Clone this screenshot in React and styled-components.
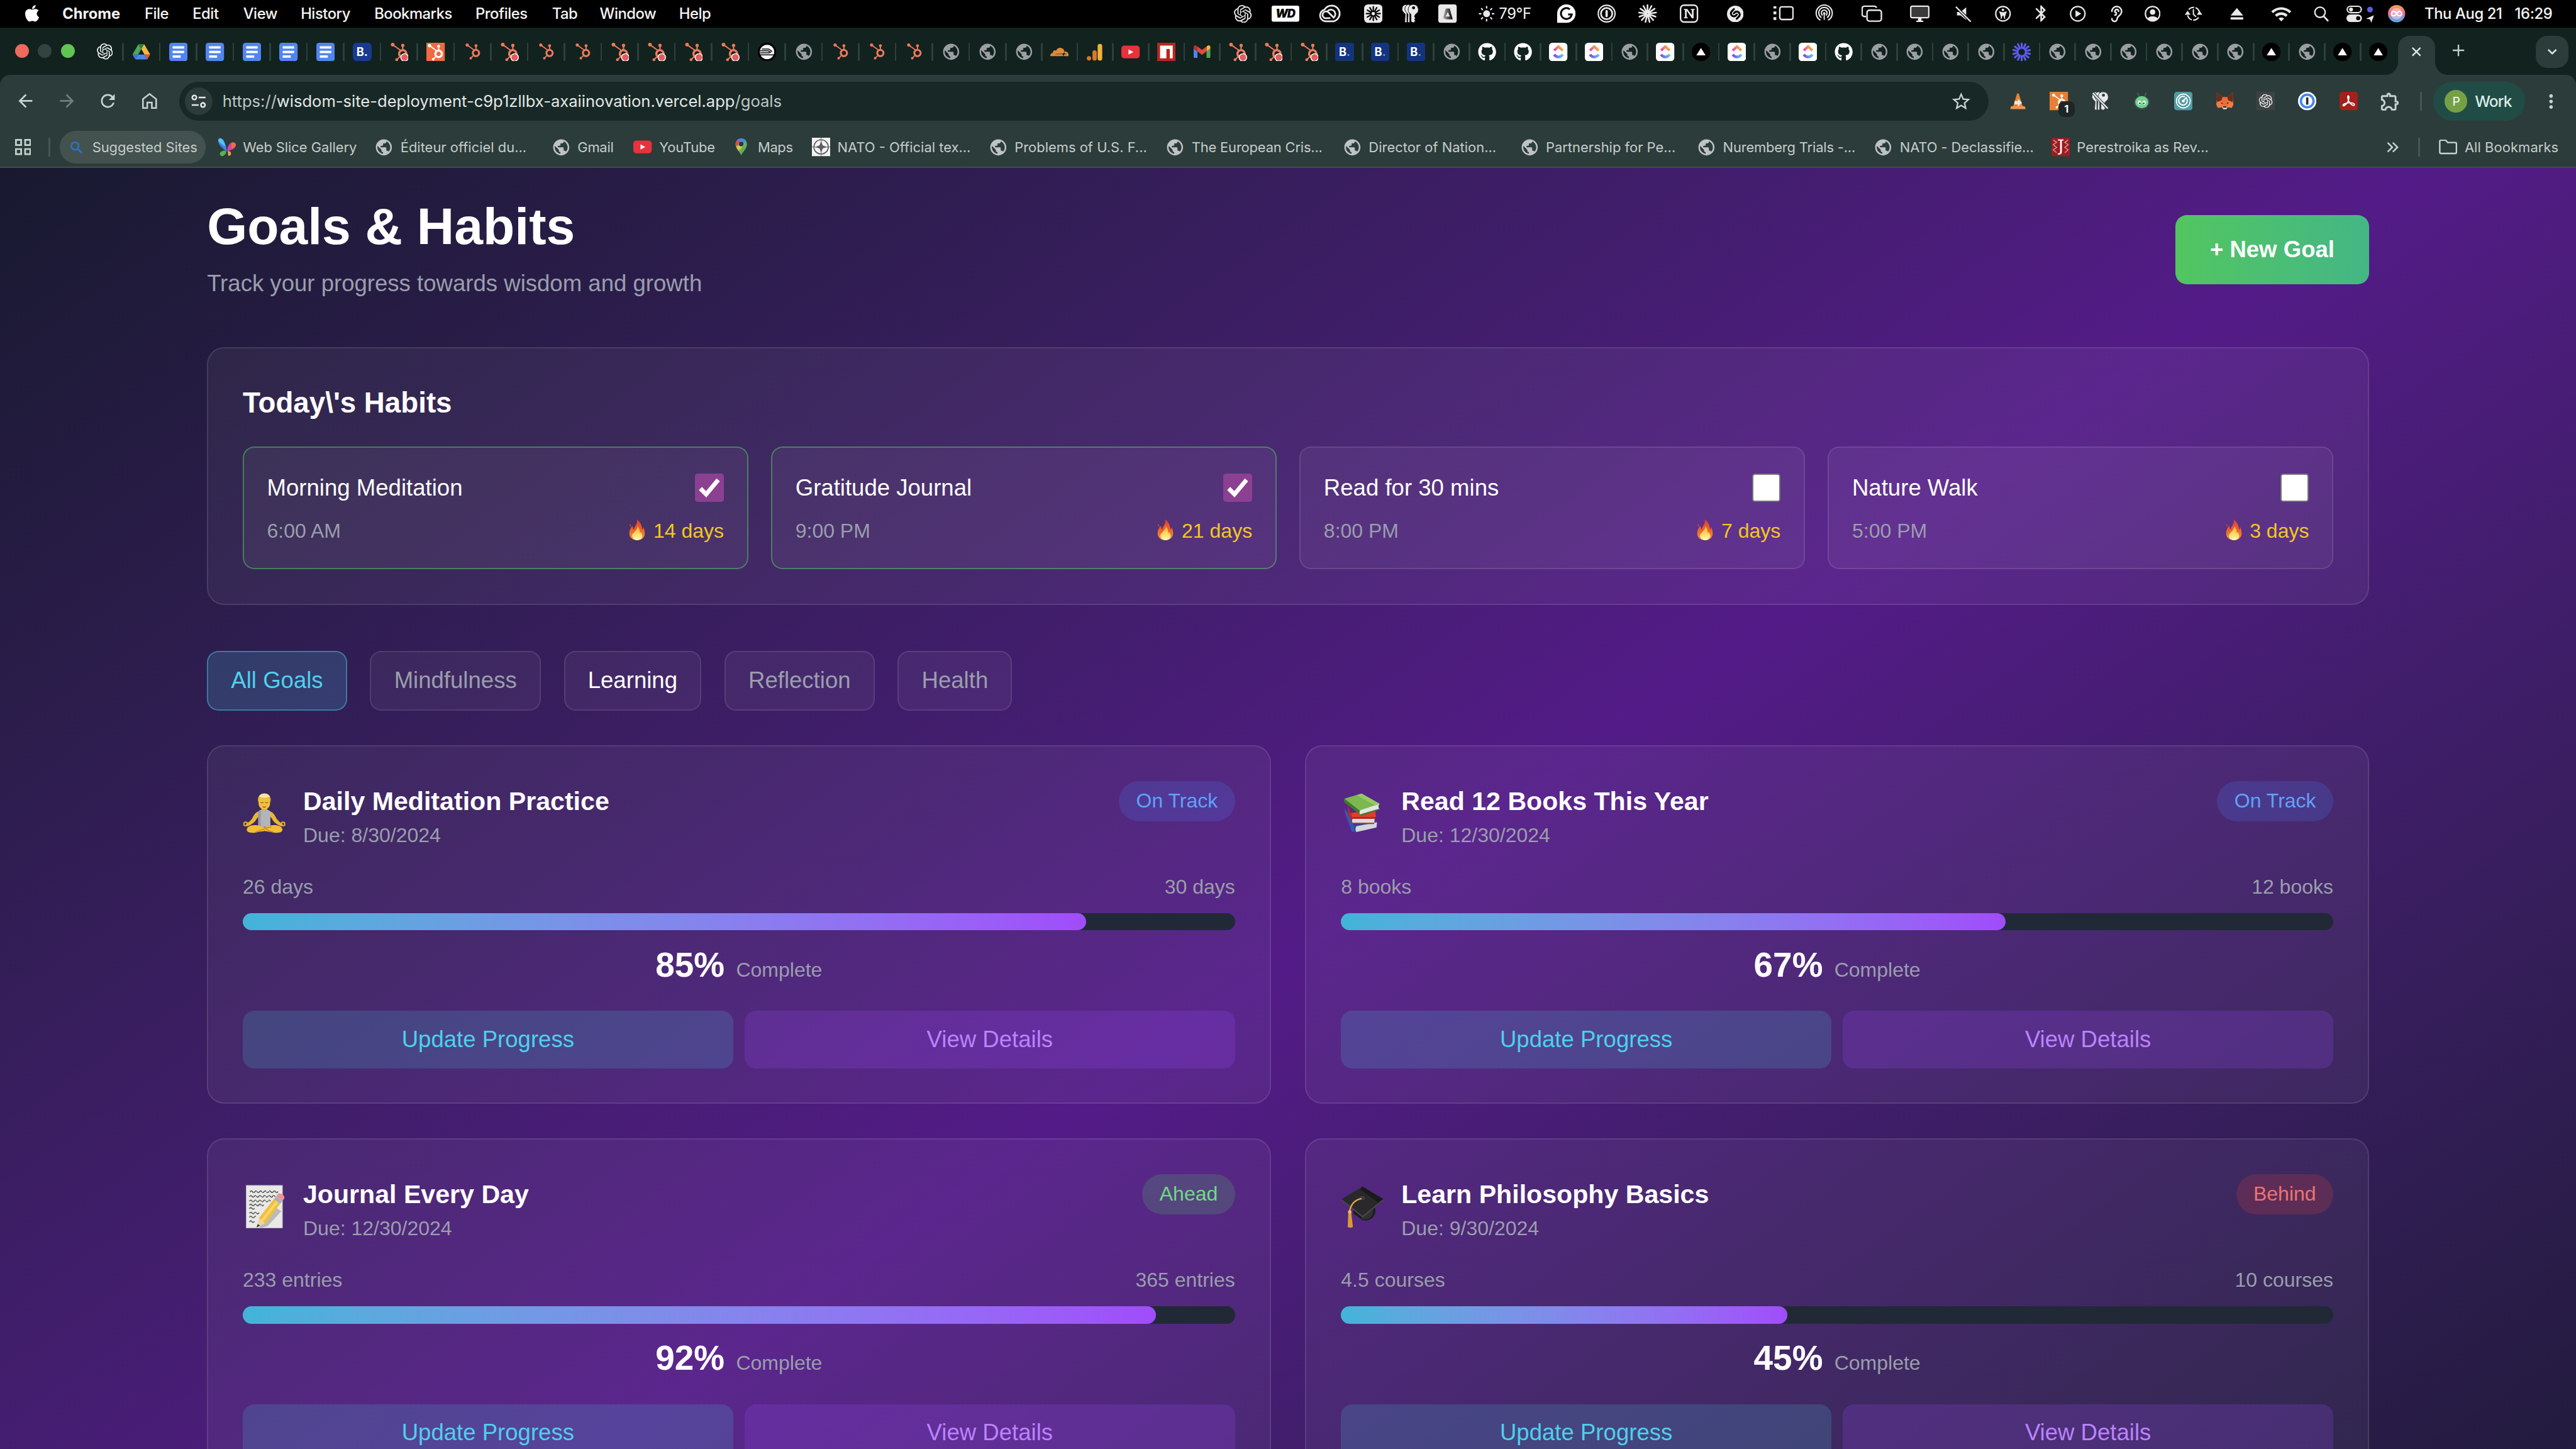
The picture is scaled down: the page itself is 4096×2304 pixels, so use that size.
import React from 'react';
import styled, { createGlobalStyle, css } from 'styled-components';
import { FaApple, FaHubspot, FaGithub } from 'react-icons/fa';
import { SiOpenai, SiShazam, SiCloudflare } from 'react-icons/si';
import {
  MdPublic, MdArrowBack, MdArrowForward, MdRefresh, MdStarBorder,
  MdOutlineExtension, MdMoreVert, MdWifi, MdBluetooth,
} from 'react-icons/md';
import { Ear } from 'lucide-react';

/* Design units: the layout is authored on a 4480-wide artboard. */
const SCALE = 4096 / 4480;
const u = (n) => `${+(n * SCALE).toFixed(3)}px`;

const Global = createGlobalStyle`
  *, *::before, *::after { box-sizing: border-box; }
  html, body { margin: 0; padding: 0; overflow: hidden; background: #12221f; }
  button { font: inherit; border: 0; cursor: pointer; }
  h1, h2, h3, p { margin: 0; }
  svg { display: block; flex: none; }
`;

const Screen = styled.div`
  width: 4096px;
  height: 2304px;
  overflow: hidden;
  display: flex;
  flex-direction: column;
`;

/* ---------- shared drawing helpers ---------- */
const Glyph = ({ w = 32, h = w, vb = `0 0 ${w} ${h}`, children, ...rest }) => (
  <svg width={w * SCALE} height={h * SCALE} viewBox={vb} fill="none" {...rest}>{children}</svg>
);

const Globe = ({ color = '#9b9fa2' }) => <MdPublic size={33.6 * SCALE} color={color} />;

/* ---------- macOS menu bar ---------- */
const uiFont = css`font-family: Inter, 'Liberation Sans', sans-serif;`;

const MenuBar = styled.header`
  ${uiFont}
  flex: none;
  height: ${u(48)};
  background: #000;
  color: #f4f4f4;
  font-size: ${u(26)};
  display: flex;
  align-items: center;
  padding-left: ${u(39)};
`;
const AppleSlot = styled.div`
  width: ${u(69.5)};
  padding-bottom: ${u(2)};
`;
const MenuItem = styled.div`
  width: ${(p) => u(p.$w)};
  white-space: nowrap;
  font-weight: ${(p) => (p.$bold ? 700 : 500)};
  letter-spacing: ${(p) => u(p.$ls ?? -0.5)};
`;
const StatusArea = styled.div`
  display: flex;
  align-items: center;
`;
const Slot = styled.div`
  width: ${(p) => u(p.$w ?? 32)};
  margin-left: ${(p) => u(p.$gap)};
  height: ${u(48)};
  display: flex;
  align-items: center;
  justify-content: ${(p) => (p.$start ? 'flex-start' : 'center')};
  white-space: nowrap;
  font-weight: ${(p) => p.$weight ?? 500};
  letter-spacing: ${(p) => u(p.$ls ?? -0.4)};
`;

const ray = (n, r1, r2, c = 16) => Array.from({ length: n }, (_, i) => {
  const a = (i / n) * Math.PI * 2;
  return `M${(c + Math.sin(a) * r1).toFixed(2)} ${(c - Math.cos(a) * r1).toFixed(2)}L${(c + Math.sin(a) * r2).toFixed(2)} ${(c - Math.cos(a) * r2).toFixed(2)}`;
}).join('');

const W = '#e9e9e9';
const WdIcon = () => (
  <Glyph w={48} h={28}>
    <rect width="48" height="28" rx="3" fill="#fff" />
    <text x="23.500" y="21" textAnchor="middle" fontFamily="Inter, sans-serif" fontWeight="900" fontStyle="italic" fontSize="20" letterSpacing="-1.500" fill="#000">WD</text>
  </Glyph>
);
const CreativeCloud = () => (
  <Glyph w={40} h={32}>
    <g stroke={W} strokeWidth="3" strokeLinecap="round">
      <path d="M12 29.500a10.500 10.500 0 0 1-1-20.500C14 4 18 2 24 2a14 14 0 0 1 3 27.500z" />
      <path d="M20 24l-5 0a6 6 0 1 1 3-10l9 9" />
      <path d="M17 11a7.500 7.500 0 1 1 10 12" />
    </g>
  </Glyph>
);
const BurstTile = () => (
  <Glyph><rect width="32" height="32" rx="7" fill={W} /><path d={ray(12, 4, 12)} stroke="#000" strokeWidth="2.400" strokeLinecap="round" /></Glyph>
);
const Keys = ({ slash }) => (
  <Glyph>
    <g fill={W} stroke={slash ? '#2c3c3a' : '#000'} strokeWidth="1">
      <path d="M9 0a8 8 0 0 0-5 14l3 3-1 14 4 1V2z" />
      <path d="M14 0a8 8 0 0 0-5 14l3 3-1 14 4 1V2z" />
      <path d="M21 0a9 9 0 0 0-4 17v13l4 2 4-3-2-3 2-2-2-3 2-4A9 9 0 0 0 21 0z" />
    </g>
    <circle cx="21.500" cy="6" r="2.600" fill={slash ? '#2c3c3a' : '#000'} />
    {slash && <path d="M3 2l26 27" stroke="#2c3c3a" strokeWidth="5" />}
    {slash && <path d="M3 2l26 27" stroke={W} strokeWidth="2.600" />}
  </Glyph>
);
const TriangleTile = () => (
  <Glyph>
    <defs><linearGradient id="triShade"><stop offset="0" stopColor="#b5b5b5" /><stop offset="1" stopColor="#000" /></linearGradient></defs>
    <rect width="32" height="32" rx="4" fill={W} />
    <path d="M13 7h7l5 19H14l-6-2z" fill="url(#triShade)" />
    <path d="M16.500 13l-3.500 8h7z" fill={W} />
  </Glyph>
);
const Sun = () => (
  <Glyph w={28}><circle cx="14" cy="14" r="6" fill={W} /><path d={ray(8, 10, 12.500, 14)} stroke={W} strokeWidth="2.400" strokeLinecap="round" /></Glyph>
);
const GrammarlyIcon = () => (
  <Glyph>
    <path d="M16 0a16 16 0 0 1 0 32H0V16A16 16 0 0 1 16 0z" fill="#fff" />
    <path d="M22 8.500a9.500 9.500 0 1 0 3.400 9H19" stroke="#000" strokeWidth="3.200" />
  </Glyph>
);
const OnePassMenu = () => (
  <Glyph>
    <circle cx="16" cy="16" r="14.600" stroke={W} strokeWidth="2.400" />
    <circle cx="16" cy="16" r="9.800" stroke={W} strokeWidth="3" />
    <rect x="14" y="9.500" width="4" height="13" rx="2" fill={W} />
  </Glyph>
);
const Burst = ({ color = W, n = 13, inner = 2, sw = 2.800 }) => (
  <Glyph><path d={ray(n, inner, 15)} stroke={color} strokeWidth={sw} strokeLinecap="round" /></Glyph>
);
const NotionIcon = () => (
  <Glyph>
    <rect x="1.300" y="1.300" width="29.400" height="29.400" rx="6" stroke={W} strokeWidth="2.600" />
    <path d="M7 8h6l8 11v-9l-2-1V8h7v1l-2 1v14h-3l-9-13v11l2 1v1H7v-1l2-1V10L7 9z" fill={W} />
  </Glyph>
);
const StageManager = () => (
  <Glyph w={36} h={28}>
    <rect x="12" y="2" width="23" height="22" rx="3.500" stroke={W} strokeWidth="2.600" />
    <path d="M1 1h5v4H1zM1 10h5v5H1zM1 20h5v5H1z" fill={W} />
  </Glyph>
);
const Airdrop = () => (
  <Glyph>
    <g stroke={W} strokeWidth="2.200" strokeLinecap="round">
      <path d="M8.500 27a14 14 0 1 1 15 0" /><path d="M10.500 22.500a9.500 9.500 0 1 1 11 0" /><path d="M12.500 18.500a5 5 0 1 1 7 0" />
    </g>
    <circle cx="16" cy="15.500" r="2.200" fill={W} /><path d="M16 17v10" stroke={W} strokeWidth="2" />
  </Glyph>
);
const CopyWindows = () => (
  <Glyph w={36} h={30}>
    <path d="M8 20H5a4 4 0 0 1-4-4V6a4 4 0 0 1 4-4h17a4 4 0 0 1 4 3" stroke={W} strokeWidth="2.600" />
    <rect x="9.500" y="9" width="25" height="19" rx="4" stroke={W} strokeWidth="2.600" />
  </Glyph>
);
const Display = () => (
  <Glyph w={34} h={30}>
    <rect x="1.300" y="2" width="31.400" height="20" rx="2.500" fill="#3a3a3a" stroke={W} strokeWidth="2.400" />
    <path d="M14 23h6v4h3v2.500H11V27h3z" fill={W} />
  </Glyph>
);
const Mute = () => (
  <Glyph w={28}>
    <path d="M3 11h6l10-8v22l-10-8H3z" fill={W} />
    <path d="M1 2l26 26" stroke="#000" strokeWidth="5" /><path d="M1 2l26 26" stroke={W} strokeWidth="2.400" />
  </Glyph>
);
const Accessibility = () => (
  <Glyph w={28}>
    <circle cx="14" cy="14" r="12.600" stroke={W} strokeWidth="2.400" />
    <circle cx="14" cy="7.500" r="2.200" fill={W} />
    <path d="M8 11l4.500 1.200v4L11 22M20 11l-4.500 1.200v4L17 22M12.500 12.500h3v4h-3z" stroke={W} strokeWidth="1.900" strokeLinecap="round" fill={W} fillRule="evenodd" />
  </Glyph>
);
const PlayCircle = () => (
  <Glyph w={28}><circle cx="14" cy="14" r="12.600" stroke={W} strokeWidth="2.400" /><path d="M10 8l10 6-10 6z" fill={W} /></Glyph>
);
const UserCircle = () => (
  <Glyph w={28}>
    <circle cx="14" cy="14" r="12.600" stroke={W} strokeWidth="2.400" />
    <circle cx="14" cy="11" r="4.800" fill={W} /><path d="M5 23c2-6 16-6 18 0a12 12 0 0 1-18 0z" fill={W} />
  </Glyph>
);
const TimeMachine = () => (
  <Glyph>
    <path d="M6 19a10.500 10.500 0 0 0 19 3.500M26.500 14A10.500 10.500 0 0 0 8 9" stroke={W} strokeWidth="2.300" strokeDasharray="11 2.500" />
    <path d="M1 18l5-7 5 7z" fill={W} /><path d="M16 9v8l4 4" stroke={W} strokeWidth="2.200" strokeLinecap="round" />
    <path d="M22 18l4.500-7 5 7z" fill={W} />
  </Glyph>
);
const Eject = () => (
  <Glyph w={28} h={24}><path d="M14 2l11 13H3z" fill={W} /><rect x="3" y="18" width="22" height="4" fill={W} /></Glyph>
);
const SearchIcon = () => (
  <Glyph w={28}><circle cx="12" cy="11.500" r="9" stroke={W} strokeWidth="2.500" /><path d="M18.500 18.500l7 7.500" stroke={W} strokeWidth="3" strokeLinecap="round" /></Glyph>
);
const ControlCenter = () => (
  <Glyph w={50} h={32}>
    <rect x="1.300" y="3.300" width="24.500" height="11" rx="5.500" stroke={W} strokeWidth="2.400" /><circle cx="8" cy="8.800" r="3.400" fill={W} />
    <rect x="0" y="17.500" width="27" height="13" rx="6.500" fill={W} /><circle cx="20.500" cy="24" r="3.600" fill="#000" />
    <circle cx="41" cy="9" r="5" fill="#5e5ce6" />
    <path d="M34 25l14-6-5 13-2-6z" fill={W} />
  </Glyph>
);
const Siri = () => (
  <Glyph w={30}>
    <defs>
      <linearGradient id="siri" x1="0" y1="0" x2="0" y2="1"><stop offset="0" stopColor="#f7a24a" /><stop offset=".45" stopColor="#ec6f9b" /><stop offset="1" stopColor="#3fb4f5" /></linearGradient>
    </defs>
    <circle cx="15" cy="15" r="15" fill="url(#siri)" />
    <circle cx="15" cy="15" r="10" fill="#fff" opacity=".4" />
    <path d="M15 15c-3-6-9-4-9 0s6 6 9 0 9-4 9 0-6 6-9 0z" stroke="#fff" strokeWidth="2" />
  </Glyph>
);

const MENU = [
  ['Chrome', 143, true], ['File', 83.5], ['Edit', 88], ['View', 100], ['History', 128],
  ['Bookmarks', 176], ['Profiles', 133], ['Tab', 83], ['Window', 138], ['Help', 965],
];

const MacMenu = () => (
  <MenuBar>
    <AppleSlot><FaApple size={33 * SCALE} color="#fff" /></AppleSlot>
    {MENU.map(([t, w, b]) => <MenuItem key={t} $w={w} $bold={b} $ls={b ? 0 : -0.5}>{t}</MenuItem>)}
    <StatusArea>
      <Slot $gap={0}><SiOpenai size={31 * SCALE} color={W} /></Slot>
      <Slot $gap={34} $w={48}><WdIcon /></Slot>
      <Slot $gap={33} $w={40}><CreativeCloud /></Slot>
      <Slot $gap={39}><BurstTile /></Slot>
      <Slot $gap={33}><Keys /></Slot>
      <Slot $gap={33}><TriangleTile /></Slot>
      <Slot $gap={38} $w={28}><Sun /></Slot>
      <Slot $gap={7} $w={58} $start $weight={400}>79°F</Slot>
      <Slot $gap={43}><GrammarlyIcon /></Slot>
      <Slot $gap={38}><OnePassMenu /></Slot>
      <Slot $gap={40}><Burst /></Slot>
      <Slot $gap={40}><NotionIcon /></Slot>
      <Slot $gap={48}><SiShazam size={29 * SCALE} color={W} /></Slot>
      <Slot $gap={50} $w={36}><StageManager /></Slot>
      <Slot $gap={37}><Airdrop /></Slot>
      <Slot $gap={49} $w={36}><CopyWindows /></Slot>
      <Slot $gap={48} $w={34}><Display /></Slot>
      <Slot $gap={45} $w={28}><Mute /></Slot>
      <Slot $gap={41} $w={28}><Accessibility /></Slot>
      <Slot $gap={40} $w={24}><MdBluetooth size={34 * SCALE} color={W} /></Slot>
      <Slot $gap={38.5} $w={28}><PlayCircle /></Slot>
      <Slot $gap={38.5} $w={28}><Ear size={31 * SCALE} color={W} strokeWidth={2.1} /></Slot>
      <Slot $gap={35} $w={28}><UserCircle /></Slot>
      <Slot $gap={41.5}><TimeMachine /></Slot>
      <Slot $gap={45} $w={28}><Eject /></Slot>
      <Slot $gap={45.5} $w={36}><MdWifi size={38 * SCALE} color={W} /></Slot>
      <Slot $gap={37.5} $w={28}><SearchIcon /></Slot>
      <Slot $gap={29.5} $w={50}><ControlCenter /></Slot>
      <Slot $gap={23} $w={30}><Siri /></Slot>
      <Slot $gap={33} $w={157} $start>Thu Aug 21</Slot>
      <Slot $gap={0} $w={70} $start>16:29</Slot>
    </StatusArea>
  </MenuBar>
);

/* ---------- Chrome tab strip ---------- */
const TabStrip = styled.div`
  ${uiFont}
  flex: none;
  height: ${u(82)};
  background: #12221f;
  display: flex;
  align-items: flex-start;
  padding-top: ${u(14)};
  padding-left: ${u(26)};
`;
const Lights = styled.div`
  display: flex;
  gap: ${u(16)};
  padding-top: ${u(15)};
  width: ${u(124)};
`;
const Light = styled.span`
  width: ${u(24)};
  height: ${u(24)};
  border-radius: 50%;
  background: ${(p) => p.$c};
`;
const TabCell = styled.div`
  flex: none;
  width: ${(p) => u(p.$w)};
  height: ${u(32)};
  margin-top: ${u(12)};
  display: flex;
  align-items: center;
  justify-content: center;
  position: relative;
  ${(p) => !p.$last && css`
    &::after {
      content: '';
      position: absolute;
      right: ${u(-1.5)};
      top: 0;
      width: ${u(3)};
      height: 100%;
      background: #2f403c;
      border-radius: 2px;
    }
  `}
`;
const BookingTile = styled.div`
  width: ${u(32)};
  height: ${u(32)};
  border-radius: ${(p) => u(p.$round ? 7 : 4)};
  background: ${(p) => (p.$round ? '#183a8f' : '#14347d')};
  color: #fff;
  font-weight: 700;
  font-size: ${u(20)};
  display: flex;
  align-items: center;
  justify-content: center;
  span { color: ${(p) => (p.$round ? '#fff' : '#3fa3e0')}; }
`;
const ActiveTab = styled.div`
  flex: none;
  margin-left: ${u(3.5)};
  width: ${u(64)};
  height: ${u(68)};
  background: #2c3c3a;
  border-radius: ${u(20)} ${u(20)} 0 0;
  display: flex;
  justify-content: center;
  padding-top: ${u(19)};
  position: relative;
  &::before, &::after {
    content: '';
    position: absolute;
    bottom: 0;
    width: ${u(22)};
    height: ${u(22)};
  }
  &::before { left: ${u(-22)}; background: radial-gradient(circle ${u(22)} at 0 0, transparent 98%, #2c3c3a 100%); }
  &::after { right: ${u(-22)}; background: radial-gradient(circle ${u(22)} at 100% 0, transparent 98%, #2c3c3a 100%); }
`;
const NewTab = styled.div`
  margin-left: ${u(30)};
  padding-top: ${u(15)};
`;
const TabSearch = styled.div`
  margin-left: ${u(124)};
  width: ${u(56)};
  height: ${u(56)};
  border-radius: ${u(20)};
  background: #2c3c3a;
  display: flex;
  align-items: center;
  justify-content: center;
`;

const hubPlain = <FaHubspot size={28 * SCALE} color="#ee7a5a" />;
const Dotted = () => (
  <Glyph>
    <FaHubspot x="0" y="0" width="32" height="32" size="32" color="#ee7a5a" />
    <circle cx="25.500" cy="25.500" r="6.500" fill="#e25c60" stroke="#fff" strokeWidth="1.600" />
  </Glyph>
);
const HubTile = () => (
  <Glyph><rect width="32" height="32" fill="#ee6a43" /><FaHubspot x="1" y="2" width="29" height="29" size="29" color="#fff" /></Glyph>
);
const Drive = () => (
  <Glyph w={30} h={27} vb="0 0 87.300 78">
    <path fill="#3b76e0" d="m6.600 66.850 3.850 6.650c.8 1.400 1.950 2.500 3.300 3.300l13.750-23.800h-27.500c0 1.550.4 3.100 1.200 4.500z" />
    <path fill="#4fa658" d="m43.650 25-13.750-23.800c-1.350.8-2.500 1.900-3.300 3.300l-25.400 44a9.060 9.060 0 0 0 -1.200 4.500h27.500z" />
    <path fill="#e2503f" d="m73.550 76.800c1.350-.8 2.500-1.900 3.300-3.300l1.600-2.750 7.650-13.250c.8-1.400 1.200-2.950 1.200-4.500h-27.502l5.852 11.500z" />
    <path fill="#2f7c3c" d="m43.650 25 13.750-23.800c-1.350-.8-2.900-1.200-4.500-1.200h-18.500c-1.600 0-3.150.45-4.500 1.200z" />
    <path fill="#4a86f0" d="m59.800 53h-32.300l-13.750 23.800c1.350.8 2.900 1.200 4.500 1.200h50.800c1.600 0 3.150-.45 4.500-1.200z" />
    <path fill="#f4b83f" d="m73.400 26.500-12.700-22c-.8-1.400-1.950-2.500-3.300-3.300l-13.750 23.800 16.150 28h27.450c0-1.550-.4-3.100-1.200-4.500z" />
  </Glyph>
);
const Docs = () => (
  <Glyph><rect width="32" height="32" rx="5" fill="#5285ee" /><path d="M6 6h20v4H6zM6 14h20v4H6zM6 22h14v4H6z" fill="#fff" /></Glyph>
);
const StripeDisc = () => (
  <Glyph>
    <circle cx="16" cy="16" r="16" fill="#000" /><circle cx="16" cy="16" r="12.500" fill="#fff" />
    <path d="M7 11h12l6 4.500M4 14h14l5 3M4 17.500h17M4 21h24" stroke="#000" strokeWidth="1.500" />
  </Glyph>
);
const Analytics = () => (
  <Glyph><circle cx="5" cy="27" r="3.800" fill="#d9772b" /><rect x="11" y="13" width="7.500" height="18" rx="3.700" fill="#d9772b" /><rect x="20" y="2" width="8" height="29" rx="4" fill="#f2b13a" /></Glyph>
);
const YouTube = () => (
  <Glyph><rect y="5" width="32" height="22" rx="5" fill="#e8323c" /><path d="M12.500 11.500l8.500 4.500-8.500 4.500z" fill="#fff" /></Glyph>
);
const RedTile = () => (
  <Glyph><rect width="32" height="32" fill="#b8261c" /><path d="M5 5h22v22h-5V11h-6v16H5z" fill="#fff" /></Glyph>
);
const Gmail = () => (
  <Glyph w={29} h={22} vb="52 42 88 66">
    <path fill="#4d84ee" d="M58 108h14V74L52 59v43c0 3.320 2.690 6 6 6" /><path fill="#4fa658" d="M120 108h14c3.320 0 6-2.690 6-6V59l-20 15" />
    <path fill="#f4b83f" d="M120 48v26l20-15v-8c0-7.420-8.470-11.650-14.400-7.200" /><path fill="#dd4b3e" d="M72 74V48l24 18 24-18v26L96 92" />
    <path fill="#b53427" d="M52 51v8l20 15V48l-5.600-4.200c-5.940-4.450-14.400-.22-14.400 7.200" />
  </Glyph>
);
const ClickUp = () => (
  <Glyph>
    <defs>
      <linearGradient id="cuA" x1="0" y1="1" x2="1" y2="0.6"><stop offset="0" stopColor="#e23fc0" /><stop offset="1" stopColor="#f4b23c" /></linearGradient>
      <linearGradient id="cuB"><stop offset="0" stopColor="#7b4bf0" /><stop offset="1" stopColor="#62c5f5" /></linearGradient>
    </defs>
    <rect width="32" height="32" rx="6" fill="#fff" />
    <path d="M9 13.500l7.500-7L24 13.500" stroke="url(#cuA)" strokeWidth="4.500" />
    <path d="M9 20.500c4 5.500 11 5.500 15 0" stroke="url(#cuB)" strokeWidth="4.800" />
  </Glyph>
);
const Vercel = () => (<Glyph><circle cx="16" cy="16" r="16" fill="#000" /><path d="M16 9l8 13H8z" fill="#fff" /></Glyph>);
const Github = <FaGithub size={32 * SCALE} color="#fff" />;

const TAB_ICONS = {
  ai: <SiOpenai size={28 * SCALE} color="#f2f2f2" />,
  drive: <Drive />,
  doc: <Docs />,
  b1: <BookingTile $round>B<span>.</span></BookingTile>,
  b: <BookingTile>B<span>.</span></BookingTile>,
  hd: <Dotted />,
  ht: <HubTile />,
  h: hubPlain,
  sd: <StripeDisc />,
  g: <Globe />,
  cf: <SiCloudflare size={32 * SCALE} color="#e2893a" />,
  ga: <Analytics />,
  yt: <YouTube />,
  red: <RedTile />,
  gm: <Gmail />,
  gh: Github,
  cu: <ClickUp />,
  v: <Vercel />,
  st: <Burst color="#5f5af0" n={14} inner={7} sw={3.4} />,
};
const TABS = ('ai drive doc doc doc doc doc b1 hd ht h hd h h hd hd hd hd sd g h h h g g g cf ga yt red gm hd hd hd '
  + 'b b b g gh gh cu cu g cu v cu g cu gh g g g g st g g g g g g v g v v').split(' ');
const tabWidth = (i) => (i < 25 ? 64 : 62);

const Tabs = () => (
  <TabStrip>
    <Lights><Light $c="#ec6a5e" /><Light $c="#33433f" /><Light $c="#61c554" /></Lights>
    {TABS.map((t, i) => (
      <TabCell key={i} $w={tabWidth(i)} $last={i === TABS.length - 1}>{TAB_ICONS[t]}</TabCell>
    ))}
    <ActiveTab><Glyph w={18}><path d="M2 2l14 14M16 2L2 16" stroke="#e3e9e6" strokeWidth="2.500" /></Glyph></ActiveTab>
    <NewTab><Glyph w={22}><path d="M11 1v20M1 11h20" stroke="#c3cfcb" strokeWidth="2.600" /></Glyph></NewTab>
    <TabSearch><Glyph w={18} h={12}><path d="M2 2l7 7 7-7" stroke="#dfe6e3" strokeWidth="2.800" /></Glyph></TabSearch>
  </TabStrip>
);

/* ---------- Chrome toolbar ---------- */
const ToolbarBack = styled.div`
  flex: none;
  background: #12221f;
`;
const Toolbar = styled.div`
  ${uiFont}
  height: ${u(92)};
  padding: ${u(12)} 0 ${u(12)} ${u(24)};
  background: #2c3c3a;
  border-radius: ${u(18)} ${u(18)} 0 0;
  display: flex;
  align-items: center;
`;
const NavSlot = styled.div`
  width: ${u(40)};
  margin-right: ${u(32)};
  display: flex;
  justify-content: center;
`;
const Omnibox = styled.div`
  width: ${u(3146)};
  height: ${u(68)};
  border-radius: ${u(34)};
  background: #182826;
  display: flex;
  align-items: center;
  padding-left: ${u(10)};
  padding-right: ${u(28)};
  font-size: ${u(28)};
  color: #e2e8e6;
`;
const SiteInfo = styled.div`
  width: ${u(48)};
  height: ${u(48)};
  border-radius: 50%;
  background: #2c3c3a;
  display: flex;
  align-items: center;
  justify-content: center;
  margin-right: ${u(17)};
`;
const Url = styled.div`
  flex: 1;
  white-space: nowrap;
  letter-spacing: ${u(-0.02)};
  span { color: #bcc6c3; }
`;
const Extensions = styled.div`
  display: flex;
  margin-left: ${u(35)};
  gap: ${u(40)};
`;
const ExtSlot = styled.div`
  width: ${u(32)};
  height: ${u(32)};
  display: flex;
  align-items: center;
  justify-content: center;
  position: relative;
`;
const ExtBadge = styled.span`
  position: absolute;
  left: ${u(15)};
  top: ${u(16)};
  width: ${u(28)};
  height: ${u(28)};
  border-radius: ${u(9)};
  background: #1d2624;
  color: #fff;
  font-weight: 700;
  font-size: ${u(18)};
  line-height: ${u(28)};
  text-align: center;
`;
const Divider = styled.span`
  flex: none;
  width: ${u(3)};
  height: ${u(32)};
  background: #465652;
  margin-left: ${(p) => u(p.$before)};
  margin-right: ${(p) => u(p.$after)};
`;
const ProfilePill = styled.div`
  width: ${u(159)};
  height: ${u(68)};
  border-radius: ${u(34)};
  background: #214c46;
  color: #dcebe6;
  font-size: ${u(27)};
  font-weight: 500;
  display: flex;
  align-items: center;
  padding-left: ${u(19)};
  gap: ${u(13)};
  letter-spacing: ${u(-1)};
`;
const Avatar = styled.span`
  width: ${u(40)};
  height: ${u(40)};
  border-radius: 50%;
  background: #75a046;
  color: #fff;
  font-size: ${u(21)};
  font-weight: 400;
  display: flex;
  align-items: center;
  justify-content: center;
`;
const MenuDots = styled.div`
  margin-left: ${u(26)};
`;

const Vlc = () => (
  <Glyph><path d="M14.500 3h3l7 23h-17z" fill="#e9832f" /><path d="M3 27l2-2h22l2 2v3H3z" fill="#f0944a" /><path d="M10 16h6v-4l7 7-7 7v-4h-6z" fill="#e8e8e8" /></Glyph>
);
const Alien = () => (
  <Glyph><path d="M11 8L9 2M21 8l2-6" stroke="#4a5560" strokeWidth="2.500" strokeLinecap="round" /><ellipse cx="16" cy="19" rx="14" ry="12" fill="#3b4a55" /><ellipse cx="16" cy="18" rx="11.500" ry="10.500" fill="#6fd38c" /><ellipse cx="12" cy="19" rx="2.800" ry="3.600" fill="#fff" /><ellipse cx="20" cy="19" rx="2.800" ry="3.600" fill="#fff" /><circle cx="12.500" cy="20" r="1.400" fill="#223" /><circle cx="19.500" cy="20" r="1.400" fill="#223" /></Glyph>
);
const Gauge = () => (
  <Glyph><rect width="32" height="32" rx="5" fill="#4f9ca6" /><circle cx="16" cy="16" r="12" stroke="#fff" strokeWidth="1.800" /><path d="M22 12a7.500 7.500 0 1 1-4-3.500M16 16l5-6" stroke="#fff" strokeWidth="2.200" strokeLinecap="round" /><circle cx="16" cy="16" r="2.500" fill="#fff" /></Glyph>
);
const Fox = () => (
  <Glyph>
    <path d="M2 1l10 8h8l10-8v13l1 8-3 6-7-1-2 3h-6l-2-3-7 1-3-6 1-8z" fill="#e5703a" />
    <path d="M2 1l10 8-2 6-7 3-1-4zM30 1L20 9l2 6 7 3 1-4z" fill="#702a1a" />
    <path d="M3 18l7-3 2 11-8 2-3-6zM29 18l-7-3-2 11 8 2 3-6z" fill="#ee7d45" />
    <path d="M12 27l1-2h6l1 2-1.500 3h-5z" fill="#dfe3e8" /><path d="M13 25h6v2.500h-6z" fill="#262626" />
    <path d="M8.500 18.500l4 1-1 2zM23.500 18.500l-4 1 1 2z" fill="#33221c" />
  </Glyph>
);
const AiTile = () => (
  <Glyph><rect width="32" height="32" fill="#3e4242" /><SiOpenai x="4" y="4" width="24" height="24" size="24" color="#f0f0f0" /></Glyph>
);
const OnePass = () => (
  <Glyph><circle cx="16" cy="16" r="16" fill="#fff" /><circle cx="16" cy="16" r="13" fill="#3f86f3" /><circle cx="16" cy="16" r="9" fill="#fff" /><rect x="14" y="9.500" width="4" height="13" rx="1.500" fill="#222b3a" /></Glyph>
);
const Acrobat = () => (
  <Glyph><rect width="32" height="32" rx="5" fill="#a3201b" /><path d="M15 7c3 0 1 8-1.500 12S6 26 6 23.500s7-4.500 11-4.500 9 1 9 3.500-5 1-8-3-5-12.500-3-12.500z" stroke="#fff" strokeWidth="2" /></Glyph>
);
const HubOrange = () => (
  <Glyph><rect width="32" height="32" fill="#e87f35" /><FaHubspot x="3" y="3" width="26" height="26" size="26" color="#fff" /></Glyph>
);
const Tune = () => (
  <Glyph w={26} h={24}><g stroke="#e2e8e6" strokeWidth="2.800"><circle cx="5.500" cy="5.500" r="3.600" /><path d="M13 5.500h12M1 18.500h12" /><circle cx="20.500" cy="18.500" r="3.600" /></g></Glyph>
);

const ic = '#c6d3cf';
const ToolbarRow = () => (
  <ToolbarBack>
    <Toolbar>
      <NavSlot><MdArrowBack size={36 * SCALE} color={ic} /></NavSlot>
      <NavSlot><MdArrowForward size={36 * SCALE} color="#70807c" /></NavSlot>
      <NavSlot><MdRefresh size={36 * SCALE} color={ic} /></NavSlot>
      <NavSlot>
        <Glyph w={28} h={30}><path d="M2.500 11.500L14 2.500l11.500 9V27H18v-9.500h-8V27H2.500z" stroke={ic} strokeWidth="2.800" /></Glyph>
      </NavSlot>
      <Omnibox>
        <SiteInfo><Tune /></SiteInfo>
        <Url><span>https://</span>wisdom-site-deployment-c9p1zllbx-axaiinovation.vercel.app<span>/goals</span></Url>
        <MdStarBorder size={38 * SCALE} color={ic} />
      </Omnibox>
      <Extensions>
        <ExtSlot><Vlc /></ExtSlot>
        <ExtSlot><HubOrange /><ExtBadge>1</ExtBadge></ExtSlot>
        <ExtSlot><Keys slash /></ExtSlot>
        <ExtSlot><Alien /></ExtSlot>
        <ExtSlot><Gauge /></ExtSlot>
        <ExtSlot><Fox /></ExtSlot>
        <ExtSlot><AiTile /></ExtSlot>
        <ExtSlot><OnePass /></ExtSlot>
        <ExtSlot><Acrobat /></ExtSlot>
        <ExtSlot><MdOutlineExtension size={38 * SCALE} color={ic} /></ExtSlot>
      </Extensions>
      <Divider $before={36.500} $after={20} />
      <ProfilePill><Avatar>P</Avatar>Work</ProfilePill>
      <MenuDots><MdMoreVert size={38 * SCALE} color={ic} /></MenuDots>
    </Toolbar>
  </ToolbarBack>
);

/* ---------- Bookmarks bar ---------- */
const BookmarksBar = styled.div`
  ${uiFont}
  flex: none;
  height: ${u(70)};
  background: #2c3c3a;
  border-bottom: 2px solid #454b49;
  color: #c4ccca;
  font-size: ${u(24)};
  display: flex;
  align-items: center;
  padding-left: ${u(26)};
`;
const Bookmark = styled.div`
  flex: none;
  width: ${(p) => u(p.$w)};
  display: flex;
  align-items: center;
  gap: ${u(12.500)};
  white-space: nowrap;
  letter-spacing: ${(p) => u(p.$ls ?? 0)};
`;
const SuggestedPill = styled.div`
  flex: none;
  width: ${u(254)};
  height: ${u(56)};
  margin-right: ${u(20)};
  padding-left: ${u(12)};
  border-radius: ${u(28)};
  background: #43524f;
  display: flex;
  align-items: center;
  gap: ${u(12.500)};
  white-space: nowrap;
  letter-spacing: ${u(-0.1)};
`;
const IconBox = styled.span`
  width: ${u(32)};
  height: ${u(32)};
  display: flex;
  align-items: center;
  justify-content: center;
`;

const Butterfly = () => (
  <Glyph>
    <path d="M16 24C10 20 0 12 1 4c1-6 8-4 11 3 2 5 4 11 4 17z" fill="#3d7fe8" />
    <path d="M14 16C10 13 2 8 1 5c0-5 6-5 9 0z" fill="#56c3ea" />
    <path d="M17 24c-1-6 3-15 9-16 6 0 7 5 4 9s-8 4-13 7z" fill="#d83fae" />
    <path d="M24 9c6-3 9 2 7 6-2 3-4 3-7 4z" fill="#ee6b45" />
    <path d="M15 23c-5-2-11 1-11 5s4 5 7 3 4-5 4-8z" fill="#58b34f" />
    <path d="M18 23c4 0 6 3 5 6s-5 4-5-1z" fill="#f4a340" />
  </Glyph>
);
const MapPin = () => (
  <Glyph>
    <path d="M16 31c-1.500-6-10-11-10-20A10 10 0 0 1 16 1a10 10 0 0 1 10 10c0 9-8.500 14-10 20z" fill="#5bb05f" />
    <path d="M16 1A10 10 0 0 0 8 5l8 8 7.500-8.500A10 10 0 0 0 16 1z" fill="#4a84ee" />
    <path d="M8 5a10 10 0 0 0-1 10l8-9z" fill="#dd4b3e" /><path d="M7 15c1 3 3 5 5 8l10-12z" fill="#f2bb40" />
    <circle cx="16" cy="11" r="4" fill="#24364a" />
  </Glyph>
);
const Nato = () => (
  <Glyph><rect width="32" height="32" fill="#f3f3f3" /><circle cx="16" cy="16" r="12.500" stroke="#555" strokeWidth="1.800" /><path d="M16 5l2.500 8.500L27 16l-8.500 2.500L16 27l-2.500-8.500L5 16l8.500-2.500z" fill="#444" /><path d="M16 0v32M0 16h32" stroke="#777" strokeWidth="1.200" /></Glyph>
);
const JTile = () => (
  <Glyph><rect width="32" height="32" fill="#9a1d20" /><path d="M3 4l6 4-6 4 6 5-6 4 6 5M29 4l-6 4 6 4-6 5 6 4-6 5" stroke="#d99" strokeWidth="1.600" /><path d="M11 3h10v2h-3v20c0 4-4 5-7 4v-2c2 0 4 0 4-3V5h-4z" fill="#fff" /></Glyph>
);
const bg = <Globe color="#bfc3c6" />;
const BOOKMARKS = [
  ['Web Slice Gallery', 274, <Butterfly />, -0.07],
  ['Éditeur officiel du...', 308, bg, 0],
  ['Gmail', 142, bg, -0.3],
  ['YouTube', 171.500, <YouTube />, -0.2],
  ['Maps', 138.500, <MapPin />, -0.4],
  ['NATO - Official tex...', 308, <Nato />],
  ['Problems of U.S. F...', 308, bg],
  ['The European Cris...', 308, bg, -0.2],
  ['Director of Nation...', 308, bg],
  ['Partnership for Pe...', 308, bg],
  ['Nuremberg Trials -...', 307.600, bg, -0.2],
  ['NATO - Declassifie...', 307.900, bg, -0.1],
  ['Perestroika as Rev...', 580, <JTile />],
];

const Bookmarks = () => (
  <BookmarksBar>
    <Glyph w={28}><path d="M1.500 1.500h9v9h-9zM17.500 1.500h9v9h-9zM1.500 17.500h9v9h-9zM17.500 17.500h9v9h-9z" stroke={ic} strokeWidth="3" /></Glyph>
    <Divider $before={30.500} $after={16.500} />
    <SuggestedPill>
      <IconBox><Glyph w={22}><circle cx="9" cy="9" r="6.500" stroke="#2f6fc4" strokeWidth="3" /><path d="M14 14l6 6" stroke="#2f6fc4" strokeWidth="3.400" strokeLinecap="round" /></Glyph></IconBox>
      Suggested Sites
    </SuggestedPill>
    {BOOKMARKS.map(([t, w, icon, ls]) => (
      <Bookmark key={t} $w={w} $ls={ls}><IconBox>{icon}</IconBox>{t}</Bookmark>
    ))}
    <Glyph w={28} h={20}><path d="M5 2l8 8-8 8M14 2l8 8-8 8" stroke={ic} strokeWidth="2.800" /></Glyph>
    <Divider $before={30.500} $after={33} />
    <Bookmark $w={220} $ls={0.08}>
      <IconBox><Glyph w={32} h={26}><path d="M1.500 3a2 2 0 0 1 2-2h8l4 4h13a2 2 0 0 1 2 2v15a2 2 0 0 1-2 2h-25a2 2 0 0 1-2-2z" stroke={ic} strokeWidth="2.600" /></Glyph></IconBox>
      All Bookmarks
    </Bookmark>
  </BookmarksBar>
);

/* ---------- Goals & Habits page ---------- */
const Page = styled.main`
  flex: 1;
  min-height: 0;
  overflow: hidden;
  font-family: 'Liberation Sans', Arial, sans-serif;
  color: #fff;
  background: linear-gradient(to bottom right in oklab, #14182a, #531b87, #14182a) 0 ${u(-188)} / 100% ${u(3140)} no-repeat;
`;
const Container = styled.div`
  width: ${u(3760)};
  margin: 0 auto;
  padding-top: ${u(52)};
`;
const PageHeader = styled.div`
  display: flex;
  justify-content: space-between;
  align-items: center;
  margin-bottom: ${u(80)};
`;
const Title = styled.h1`
  font-size: ${u(90)};
  line-height: ${u(100)};
  font-weight: 700;
  margin-bottom: ${u(20)};
`;
const Subtitle = styled.p`
  font-size: ${u(40)};
  line-height: ${u(60)};
  color: #9a9ead;
`;
const NewGoal = styled.button`
  height: ${u(120)};
  padding: ${u(1)} ${u(60)} 0;
  border-radius: ${u(20)};
  background: linear-gradient(to right in oklab, #52c65f, #44b685);
  color: #fff;
  font-weight: 700;
  font-size: ${u(40)};
  line-height: ${u(60)};
`;
const panel = css`
  background: rgba(255, 255, 255, 0.05);
  border: 2px solid rgba(255, 255, 255, 0.1);
`;
const HabitsPanel = styled.section`
  ${panel}
  height: ${u(448)};
  border-radius: ${u(30)};
  padding: ${u(60)};
  margin-bottom: ${u(80)};
`;
const PanelTitle = styled.h2`
  font-size: ${u(50)};
  line-height: ${u(70)};
  margin-bottom: ${u(40)};
  font-weight: 700;
`;
const HabitGrid = styled.div`
  display: grid;
  grid-template-columns: repeat(4, 1fr);
  gap: ${u(40)};
`;
const HabitCard = styled.div`
  ${panel}
  height: ${u(214)};
  border-color: ${(p) => (p.$done ? 'rgba(80, 200, 98, 0.5)' : 'rgba(255, 255, 255, 0.1)')};
  border-radius: ${u(20)};
  padding: ${u(40)};
`;
const HabitRow = styled.div`
  display: flex;
  justify-content: space-between;
  align-items: center;
  height: ${(p) => u(p.$h)};
  margin-bottom: ${(p) => u(p.$mb ?? 0)};
  font-size: ${(p) => u(p.$size)};
`;
const HabitTime = styled.span`color: #9a9ead;`;
const Streak = styled.span`
  display: flex;
  align-items: center;
  gap: ${u(10.5)};
  color: #f3c81c;
  svg { margin-bottom: ${u(3)}; }
`;
const CheckBox = styled.span`
  width: ${u(50)};
  height: ${u(50)};
  border-radius: ${u(5)};
  background: ${(p) => (p.$on ? '#8b4092' : '#fff')};
  border: ${(p) => (p.$on ? '0' : '2px solid #767676')};
`;
const Filters = styled.div`
  display: flex;
  gap: ${u(40)};
  margin-bottom: ${u(60)};
`;
const Filter = styled.button`
  height: ${u(104)};
  padding: 0 ${u(39.6)};
  border-radius: ${u(20)};
  font-size: ${u(40)};
  ${panel}
  color: ${(p) => (p.$hover ? '#fff' : '#9a9ead')};
  ${(p) => p.$active && css`
    background: rgba(69, 184, 216, 0.2);
    border-color: rgba(69, 184, 216, 0.5);
    color: #4fd1ec;
  `}
`;
const GoalGrid = styled.div`
  display: grid;
  grid-template-columns: 1fr 1fr;
  gap: ${u(60)};
`;
const GoalCard = styled.article`
  ${panel}
  height: ${u(624)};
  border-radius: ${u(30)};
  padding: ${u(60)};
`;
const GoalTop = styled.div`
  display: flex;
  justify-content: space-between;
  align-items: flex-start;
  margin-bottom: ${u(40)};
`;
const GoalIdent = styled.div`
  display: flex;
  align-items: center;
  gap: ${u(30)};
`;
const EmojiBox = styled.div`
  width: ${u(75)};
  padding-bottom: ${u(7)};
`;
const GoalName = styled.h3`
  font-size: ${u(45)};
  line-height: ${u(70)};
  font-weight: 700;
`;
const GoalDue = styled.p`
  font-size: ${u(35)};
  line-height: ${u(50)};
  color: #9a9ead;
`;
const TONES = {
  'On Track': ['rgba(75, 125, 245, 0.2)', '#62a0f8'],
  Ahead: ['rgba(80, 198, 98, 0.2)', '#72d987'],
  Behind: ['rgba(225, 65, 65, 0.2)', '#ee7370'],
};
const Badge = styled.span`
  padding: ${u(10)} ${u(30)};
  border-radius: ${u(35)};
  font-size: ${u(35)};
  line-height: ${u(50)};
  background: ${(p) => TONES[p.$tone][0]};
  color: ${(p) => TONES[p.$tone][1]};
`;
const Range = styled.div`
  display: flex;
  justify-content: space-between;
  font-size: ${u(35)};
  line-height: ${u(50)};
  color: #9a9ead;
  margin-bottom: ${u(20)};
`;
const Track = styled.div`
  height: ${u(30)};
  border-radius: ${u(15)};
  background: #212936;
  margin-bottom: ${u(20)};
`;
const Fill = styled.div`
  height: 100%;
  border-radius: ${u(15)};
  background: linear-gradient(to right in oklab, #42b4d8, #a04cfb);
`;
const Percent = styled.div`
  display: flex;
  justify-content: center;
  align-items: baseline;
  gap: ${u(20)};
  height: ${u(80)};
  line-height: ${u(80)};
  margin-bottom: ${u(40)};
  font-size: ${u(35)};
  color: #9a9ead;
  strong { font-size: ${u(60)}; color: #fff; }
`;
const Actions = styled.div`
  display: flex;
  gap: ${u(20)};
`;
const Action = styled.button`
  flex: 1;
  height: ${u(100)};
  border-radius: ${u(20)};
  font-size: ${u(40)};
  background: ${(p) => (p.$kind === 'update' ? 'rgba(69, 184, 216, 0.2)' : 'rgba(155, 75, 248, 0.2)')};
  color: ${(p) => (p.$kind === 'update' ? '#4ed0ec' : '#ba83fa')};
`;

/* ---------- emoji artwork ---------- */
const Flame = () => (
  <Glyph w={35} h={36}>
    <defs>
      <linearGradient id="flO" x1="0" y1="0" x2="0" y2="1"><stop offset="0" stopColor="#e0402a" /><stop offset=".6" stopColor="#f06a2c" /><stop offset="1" stopColor="#f6a437" /></linearGradient>
      <linearGradient id="flI" x1="0" y1="0" x2="0" y2="1"><stop offset="0" stopColor="#f8a93a" /><stop offset=".5" stopColor="#fbd95a" /><stop offset="1" stopColor="#fff6c0" /></linearGradient>
    </defs>
    <path d="M17 0c1.500 5-.5 8-3 12-1.500 2.500-2 4-1.500 6-2-1.500-3-4-2.500-7C6 14.500 4 19 4 24c0 7.500 6 12 13.500 12S31 31.500 31 24c0-4-1-7.500-2.500-11-.3 2-.8 3.500-2 5C26 11 23 3.500 17 0z" fill="url(#flO)" />
    <path d="M5 8c2 1 2.500 3 1.500 5C5 12 4.500 10 5 8z" fill="#e0402a" />
    <path d="M18 11c1 4-1 6-4 9.500C12 23 9 25 9 28.500c0 4.500 4 7.500 9 7.500s8.500-3 8.500-7.500c0-3-1.500-4.500-2-7-1 1-1.500 2-2 3.500C22.500 20 21.500 15 18 11z" fill="url(#flI)" />
  </Glyph>
);
const Lotus = () => (
  <Glyph w={75}>
    <path d="M28 34c-7 2-9 8-12 13-3 4-7 7-11 10l3 3c6-2 12-6 15-11l6-9zM47 34c7 2 9 8 12 13 3 4 7 7 11 10l-3 3c-6-2-12-6-15-11l-6-9z" fill="#eab62e" />
    <circle cx="5" cy="56" r="3.200" stroke="#eab62e" strokeWidth="2" /><circle cx="70" cy="56" r="3.200" stroke="#eab62e" strokeWidth="2" />
    <path d="M33 26h9v8h-9z" fill="#dda325" />
    <path d="M28 33c3-1 4-2 5-3 2 3 7 3 9 0 1 1 2 2 5 3 2 6 1 10 1 15v13H27V48c0-5-1-9 1-15z" fill="#b3b5ba" />
    <path d="M32 34c-1 9-1 17 0 27h-5V48c0-5-1-9 1-15z" fill="#9a9ca3" />
    <path d="M7 66c0-6 8-8 15-8 6 0 11 2 16 4 5-2 10-4 16-4 7 0 15 2 15 8 0 5-7 6-14 5-6-1-12-2-17-3-5 1-11 2-17 3-7 1-14 0-14-5z" fill="#f0bd35" />
    <path d="M22 70c10-2 18-8 28-9M53 70c-6-1-10-3-13-5" stroke="#c88a1d" strokeWidth="1.800" />
    <path d="M27.500 14c0-8 20-8 20 0v6c0 6-4.500 11-10 11s-10-5-10-11z" fill="#f2c13c" />
    <path d="M26.500 18C25 8 30 3 37.500 3S50 8 48.500 18c-1-3-2-5-3-7-5 2-11 1-15-1-2 2-3 4-4 8z" fill="#dfae38" />
    <path d="M28.500 9c1-8 17-8 18.500 0-6 2.500-13 2-18.500 0z" fill="#f7e3a0" />
    <path d="M31.500 18.500c1 1 3 1 4 0M39.500 18.500c1 1 3 1 4 0M35 26c1.500 1 3.500 1 5 0" stroke="#8a5a15" strokeWidth="1.400" strokeLinecap="round" />
  </Glyph>
);
const Books = () => (
  <Glyph w={75}>
    <path d="M7 29l14 24 4 17-6-1L7 36z" fill="#3856b0" /><path d="M22 58l40-8 1 10-38 10z" fill="#2f4a9e" />
    <path d="M27 60l36-7-1 9-35 8c-2-3-2-7 0-10z" fill="#d5d7da" />
    <path d="M12 24l8 18 1 13-9-18z" fill="#b52a1e" /><path d="M18 37l42-6 1 13-42 0z" fill="#dd3f2b" />
    <path d="M21 46h38l-1 9H21c-2-3-2-6 0-9z" fill="#dadcdf" /><path d="M20 44h40v3H20zM20 54h38v2H20z" fill="#b52a1e" />
    <path d="M6 12l30-9 32 18-34 13z" fill="#7cb84f" /><path d="M6 12l28 22v6L8 20c-2-2-3-5-2-8z" fill="#3f7a2b" />
    <path d="M34 32l33-11c-2 3-2 6 0 9l-33 10c-2-2-2-6 0-8z" fill="#e3e5e2" /><path d="M34 39l34-10v2L34 42z" fill="#3f7a2b" />
    <path d="M36 3l32 18-8 3L28 6z" fill="#95c968" />
  </Glyph>
);
const Memo = () => (
  <Glyph w={75}>
    <rect x="6" y="1" width="63" height="74" fill="#e9e9e7" stroke="#bdbdbd" />
    <g stroke="#555" strokeWidth="1.700" strokeLinecap="round" strokeDasharray="7 2 4 2 10 2">
      <path d="M13 12q2-3 4 0t4 0 4 0 4 0 4 0 4 0 4 0 4 0 4 0 4 0 4 0 4 0" /><path d="M12 20q2-3 4 0t4 0 4 0 4 0 4 0 4 0 4 0 4 0 4 0 4 0 4 0" />
      <path d="M12 28q2-3 4 0t4 0 4 0 4 0 4 0 4 0 4 0 4 0 4 0" /><path d="M12 35q2-3 4 0t4 0 4 0 4 0 4 0 4 0" /><path d="M12 41q2-3 4 0t4 0" />
      <path d="M12 49q2-3 4 0t4 0 4 0 4 0" /><path d="M12 56q2-3 4 0t4 0 4 0" /><path d="M12 64q2-3 4 0t4 0" />
    </g>
    <path d="M29 71l25-34 13 9-24 26-12 3z" fill="#000" opacity=".2" />
    <path d="M28 58l26-33 11 8-26 34z" fill="#f2bf3c" /><path d="M32 61l26-33 3.500 2.500-26 33z" fill="#f9d768" />
    <path d="M54 25l4-5 11 8-4 5z" fill="#aab0b8" /><path d="M58 20l3-4c3-4 14 3 11 8l-3 4z" fill="#ee9393" />
    <path d="M28 58l11 9-14 6z" fill="#efd3a0" /><path d="M26 68l4 3-6 3z" fill="#333" />
  </Glyph>
);
const Cap = () => (
  <Glyph w={75}>
    <path d="M22 34l36 2c4 8 2 18-4 22-5 4-14 6-18 2l-14-10z" fill="#1c1c1d" />
    <path d="M36 60c8 2 18-2 20-10l1-12-18 14z" fill="#303031" />
    <path d="M38 3l36 22-36 29L1 25z" fill="#29292b" /><path d="M38 3l36 22-9 6L34 8z" fill="#1a1a1b" />
    <path d="M1 25l37 29 36-29v2L38 57 1 27z" fill="#4b4b4d" />
    <ellipse cx="37" cy="23" rx="5" ry="3.500" fill="#3c3c3e" />
    <path d="M36 24C24 26 17 34 15 48" stroke="#e2a63c" strokeWidth="2.600" />
    <path d="M13 47h5l3 26c-2 2-8 2-9 0z" fill="#d99a35" /><circle cx="15.500" cy="47" r="3" fill="#f0bd55" />
  </Glyph>
);

const HABITS = [
  ['Morning Meditation', '6:00 AM', 14, true],
  ['Gratitude Journal', '9:00 PM', 21, true],
  ['Read for 30 mins', '8:00 PM', 7, false],
  ['Nature Walk', '5:00 PM', 3, false],
];
const FILTERS = ['All Goals', 'Mindfulness', 'Learning', 'Reflection', 'Health'];
const GOALS = [
  { name: 'Daily Meditation Practice', due: '8/30/2024', from: '26 days', to: '30 days', pct: 85, tone: 'On Track', art: <Lotus /> },
  { name: 'Read 12 Books This Year', due: '12/30/2024', from: '8 books', to: '12 books', pct: 67, tone: 'On Track', art: <Books /> },
  { name: 'Journal Every Day', due: '12/30/2024', from: '233 entries', to: '365 entries', pct: 92, tone: 'Ahead', art: <Memo /> },
  { name: 'Learn Philosophy Basics', due: '9/30/2024', from: '4.5 courses', to: '10 courses', pct: 45, tone: 'Behind', art: <Cap /> },
];

const Habit = ({ name, time, days, done }) => (
  <HabitCard $done={done}>
    <HabitRow $h={60} $mb={20} $size={40}>
      <span>{name}</span>
      <CheckBox $on={done}>
        {done && <Glyph w={50}><path d="M9.500 26l10 10L40.500 11" stroke="#fff" strokeWidth="7.500" /></Glyph>}
      </CheckBox>
    </HabitRow>
    <HabitRow $h={50} $size={35}>
      <HabitTime>{time}</HabitTime>
      <Streak><Flame /><span>{days} days</span></Streak>
    </HabitRow>
  </HabitCard>
);

const Goal = ({ name, due, from, to, pct, tone, art }) => (
  <GoalCard>
    <GoalTop>
      <GoalIdent>
        <EmojiBox>{art}</EmojiBox>
        <div><GoalName>{name}</GoalName><GoalDue>Due: {due}</GoalDue></div>
      </GoalIdent>
      <Badge $tone={tone}>{tone}</Badge>
    </GoalTop>
    <Range><span>{from}</span><span>{to}</span></Range>
    <Track><Fill style={{ width: `${pct}%` }} /></Track>
    <Percent><strong>{pct}%</strong><span>Complete</span></Percent>
    <Actions>
      <Action $kind="update">Update Progress</Action>
      <Action $kind="view">View Details</Action>
    </Actions>
  </GoalCard>
);

export default function App() {
  return (
    <Screen>
      <Global />
      <MacMenu />
      <Tabs />
      <ToolbarRow />
      <Bookmarks />
      <Page>
        <Container>
          <PageHeader>
            <div>
              <Title>Goals &amp; Habits</Title>
              <Subtitle>Track your progress towards wisdom and growth</Subtitle>
            </div>
            <NewGoal>+ New Goal</NewGoal>
          </PageHeader>
          <HabitsPanel>
            <PanelTitle>{"Today\\'s Habits"}</PanelTitle>
            <HabitGrid>
              {HABITS.map(([name, time, days, done]) => <Habit key={name} name={name} time={time} days={days} done={done} />)}
            </HabitGrid>
          </HabitsPanel>
          <Filters>
            {FILTERS.map((f) => <Filter key={f} $active={f === 'All Goals'} $hover={f === 'Learning'}>{f}</Filter>)}
          </Filters>
          <GoalGrid>
            {GOALS.map((g) => <Goal key={g.name} {...g} />)}
          </GoalGrid>
        </Container>
      </Page>
    </Screen>
  );
}
